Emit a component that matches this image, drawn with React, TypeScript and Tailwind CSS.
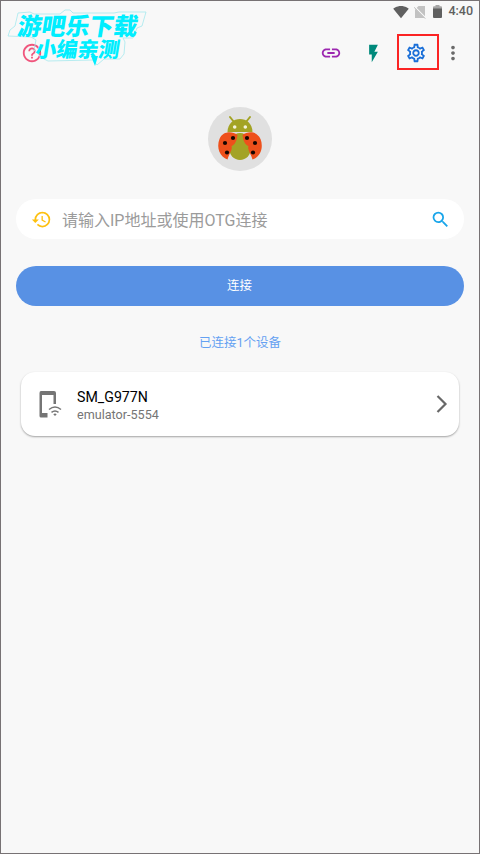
import {
  MdFlashOn,
  MdHelpOutline,
  MdHistory,
  MdLink,
  MdMoreVert,
  MdOutlineSettings,
  MdSearch,
  MdSignalWifi4Bar,
} from 'react-icons/md';

function NoSimIcon() {
  return (
    <svg viewBox="0 0 12 14" className="h-[14px] w-3" fill="none">
      <path d="M4.500 1H11V13H1V4.500Z" fill="#c2c2c2" />
      <path d="M0 1.400L12 13.400" stroke="#f8f8f8" strokeWidth="1.600" />
      <path d="M0 2.200L11.200 13.600" stroke="#b8b8b8" strokeWidth="1" />
    </svg>
  );
}

function BatteryIcon() {
  return (
    <svg viewBox="0 0 9 13" className="h-[13px] w-[9px]">
      <path d="M2.500 0H6.500V1.300H8Q9 1.300 9 2.300V4H0V2.300Q0 1.300 1 1.300H2.500Z" fill="#a5a5a5" />
      <path d="M0 3.500H9V12Q9 13 8 13H1Q0 13 0 12Z" fill="#606060" />
    </svg>
  );
}

function StatusBar() {
  return (
    <div className="flex h-[21px] items-center justify-end pr-[6px] text-[#606060]">
      <MdSignalWifi4Bar className="mr-[5px] size-[16px]" />
      <NoSimIcon />
      <span className="ml-[7px]">
        <BatteryIcon />
      </span>
      <span className="ml-[6px] text-[12.500px] font-medium leading-none">4:40</span>
    </div>
  );
}

function Toolbar() {
  return (
    <header className="flex h-[62px] items-center">
      <MdHelpOutline className="ml-[20px] size-[22px] text-[#f0567d]" />
      <MdLink className="ml-auto size-[22px] text-[#9c27b0]" />
      <MdFlashOn className="ml-[21px] size-[21px] text-[#00897b]" />
      <div className="mb-[2px] ml-[13px] flex h-[36px] w-[42px] items-center justify-center border-2 border-[#fb2424] pr-[4px] pt-[2px]">
        <MdOutlineSettings className="size-[22px] text-[#1a6fd8]" />
      </div>
      <MdMoreVert className="ml-[3px] mr-[15px] size-[22px] text-[#6a6a6a]" />
    </header>
  );
}

function Watermark() {
  return (
    <div className="pointer-events-none absolute left-[5px] top-[8px] h-[58px] w-[142px] font-['Noto_Sans_CJK_SC',sans-serif] font-black text-[#00eeff]">
      <svg viewBox="0 0 142 58" className="absolute inset-0" fill="none" stroke="#a5e8ee" strokeWidth="0.8">
        <path d="M12 4L24 3L28 5H54L59 1H64L67 4H108L113 3H140L136 17L131 19L127 29H117L119 33L118 45L114 50H98L91 56L87 51L42 52L38 50L34 47L28 41L30 31L25 28L2 27L4 21L9 17Z" />
        <path d="M85 47L89 57L92 47Z" fill="#00eeff" stroke="none" />
      </svg>
      <div className="absolute left-[12px] top-[4px] -skew-x-[9deg] whitespace-nowrap text-[24px] leading-[24px]">
        游吧乐下载
      </div>
      <div className="absolute left-[30px] top-[28px] -skew-x-[9deg] whitespace-nowrap text-[21px] leading-[22px]">
        小编亲测
      </div>
    </div>
  );
}

function LadybugLogo() {
  return (
    <svg viewBox="0 0 64 64" className="size-[64px]">
      <circle cx="32" cy="32" r="32" fill="#e0e0e0" />
      <path d="M22 10L26 15M42 10L38 15" stroke="#a3a324" strokeWidth="2" strokeLinecap="round" />
      <path d="M19.500 25C19.500 7.500 44.500 7.500 44.500 25Z" fill="#a3a324" />
      <circle cx="26.700" cy="20" r="1.800" fill="#f3f3dc" />
      <circle cx="37.300" cy="20" r="1.800" fill="#f3f3dc" />
      <path d="M32 26C25 26 21 33 21 41C21 48 26 53 32 53S43 48 43 41C43 33 39 26 32 26Z" fill="#a3a324" />
      <g id="wing">
        <path d="M29.500 28C24 24 15 24 11.500 32C8 41 12 50 19.500 52.500C21 47 25 42 23.500 39C27 38 29 33 29.500 28Z" fill="#ee501b" />
        <circle cx="25" cy="31" r="2.100" fill="#160500" />
        <circle cx="17" cy="36" r="2.100" fill="#160500" />
        <circle cx="19" cy="45.500" r="2.100" fill="#160500" />
      </g>
      <use href="#wing" transform="translate(64 0) scale(-1 1)" />
    </svg>
  );
}

function PhoneWifiIcon() {
  return (
    <svg viewBox="0 0 23 27" className="h-[27px] w-[23px]" fill="none">
      <path
        d="M2 0H15Q17 0 17 2V13H14.500V4H3V22H8.500V26.500H2Q0.500 26.500 0.500 25V2Q0.500 0 2 0Z"
        fill="#757575"
      />
      <path d="M10 18.500Q16 13.500 22 18.500M12.500 21.300Q16 18.500 19.500 21.300" stroke="#757575" strokeWidth="1.500" />
      <path d="M14.300 23.200Q16 22 17.700 23.200L16 25Z" fill="#757575" />
    </svg>
  );
}

function DeviceCard({ name, serial }: { name: string; serial: string }) {
  return (
    <div className="mx-[20px] mt-[20px] flex h-[64px] items-center rounded-[14px] bg-white pl-[18px] pr-[11px] shadow-[0_1px_2px_rgba(0,0,0,0.35)]">
      <PhoneWifiIcon />
      <div className="ml-[15px] pt-[4px]">
        <p className="text-[14.200px] leading-[18px] text-black">{name}</p>
        <p className="text-[12.600px] leading-[18px] text-[#757575]">{serial}</p>
      </div>
      <svg viewBox="0 0 12 18" className="ml-auto h-[18px] w-3" fill="none">
        <path d="M1.500 1L9.500 9L1.500 17" stroke="#686868" strokeWidth="2.200" />
      </svg>
    </div>
  );
}

export default function App() {
  return (
    <div className="relative h-[854px] w-[480px] overflow-hidden border border-[#777274] bg-[#f8f8f8] font-['Roboto','Noto_Sans_CJK_SC',sans-serif]">
      <StatusBar />
      <Toolbar />
      <Watermark />

      <div className="mt-[23px] flex justify-center">
        <LadybugLogo />
      </div>

      <div className="mx-[15px] mt-[28px] flex h-[40px] items-center rounded-full bg-white pl-[15px] pr-[13px]">
        <MdHistory className="size-[21px] text-[#fdc010]" />
        <span className="ml-[10px] pt-[3px] text-[16px] leading-none text-[#9b9b9b]">
          请输入IP地址或使用OTG连接
        </span>
        <MdSearch className="ml-auto size-[21px] text-[#18a5ea]" />
      </div>

      <button
        type="button"
        className="mx-[15px] mt-[27px] flex h-[40px] w-[448px] items-center justify-center rounded-full bg-[#5891e4] pr-px text-[12.500px] text-white"
      >
        连接
      </button>

      <p className="mt-[28px] text-center text-[12.500px] leading-[18px] text-[#64a1f2]">
        已连接1个设备
      </p>

      <DeviceCard name="SM_G977N" serial="emulator-5554" />
    </div>
  );
}
